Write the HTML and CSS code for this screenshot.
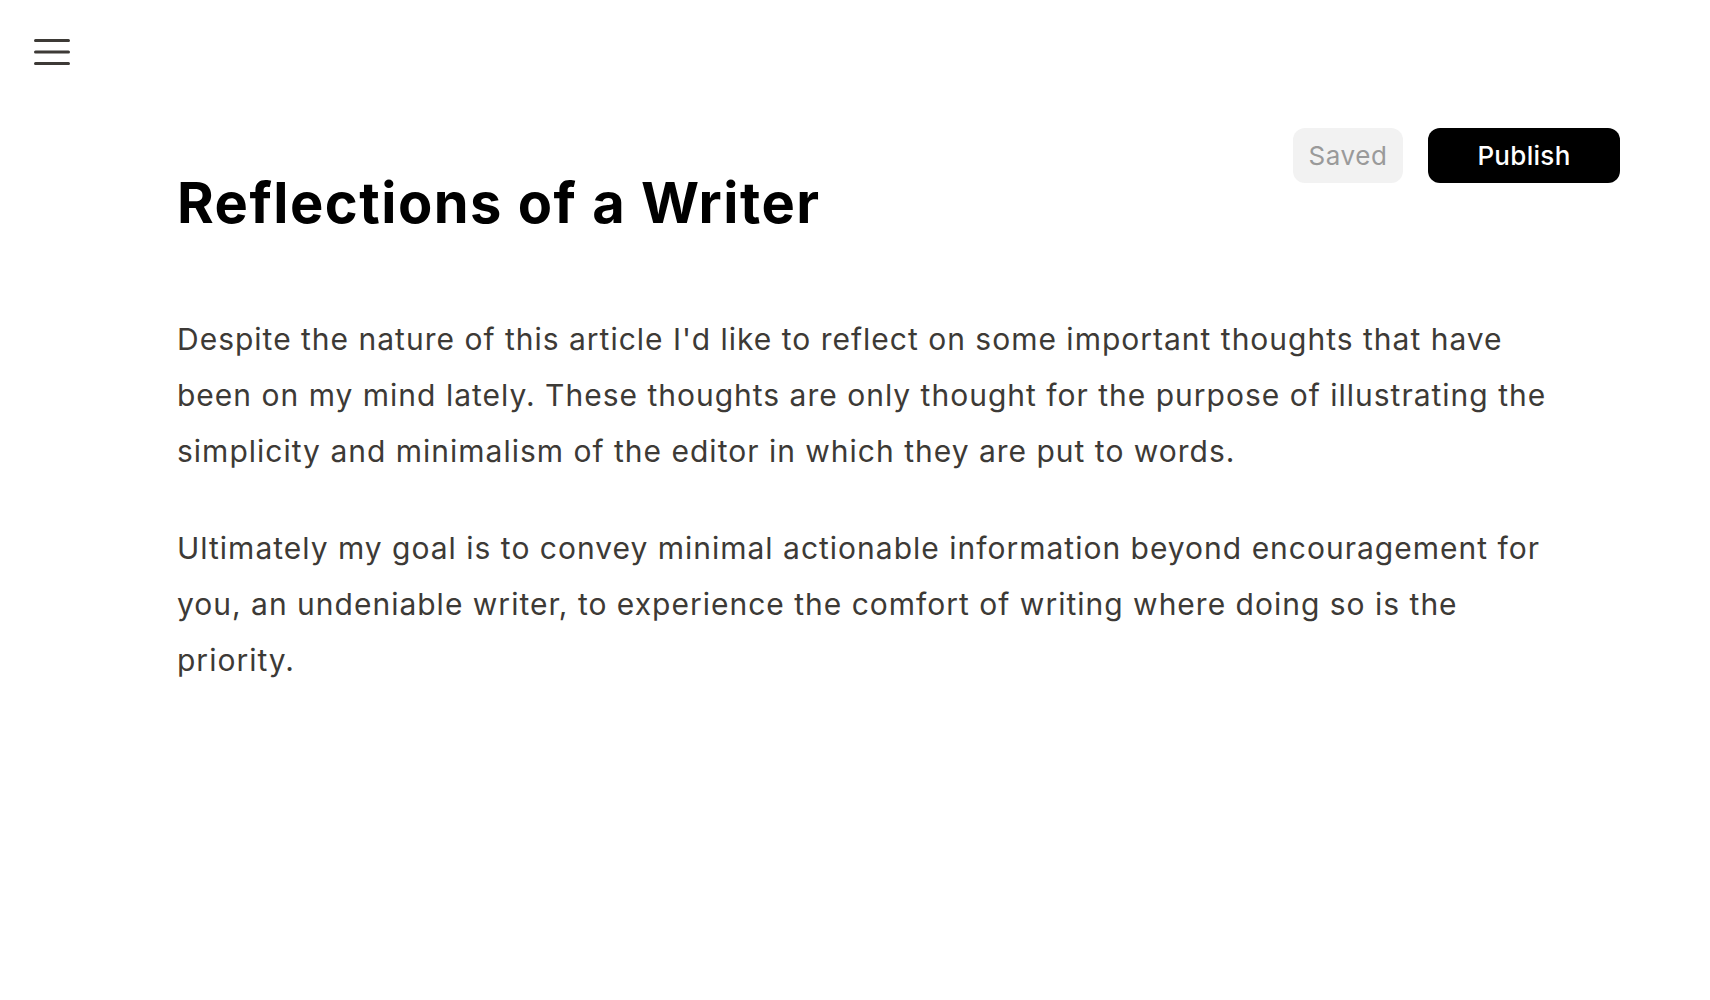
FILE: index.html
```html
<!DOCTYPE html>
<html lang="en">
<head>
    <meta charset="UTF-8">
    <meta name="viewport" content="width=device-width, initial-scale=1.0">
    <title>Reflections of a Writer</title>
    <link rel="stylesheet" href="styles.css">
</head>
<body>
    <header class="topbar">
        <button class="menu-btn" aria-label="Menu">
            <svg width="36" height="28" viewBox="0 0 36 28">
                <line x1="1.5" y1="2.5" x2="34.5" y2="2.5" />
                <line x1="1.5" y1="14" x2="34.5" y2="14" />
                <line x1="1.5" y1="25.5" x2="34.5" y2="25.5" />
            </svg>
        </button>
    </header>

    <main class="editor">
        <div class="actions">
            <span class="saved">Saved</span>
            <button class="publish">Publish</button>
        </div>

        <article class="doc">
            <h1>Reflections of a Writer</h1>
            <p>Despite the nature of this article I'd like to reflect on some important thoughts that have been on my mind lately. These thoughts are only thought for the purpose of illustrating the simplicity and minimalism of the editor in which they are put to words.</p>
            <p>Ultimately my goal is to convey minimal actionable information beyond encouragement for you, an undeniable writer, to experience the comfort of writing where doing so is the priority.</p>
        </article>
    </main>
</body>
</html>
```

FILE: styles.css
```css
* {
    margin: 0;
    padding: 0;
    box-sizing: border-box;
    font-family: 'Inter', 'Noto Sans', sans-serif;
}

body {
    min-height: 100vh;
    background: #fff;
    color: #3d3a36;
}

.topbar {
    display: flex;
    padding: 38px 34px 0;
}

.menu-btn {
    display: flex;
    background: none;
    border: none;
    cursor: pointer;
}

.menu-btn line {
    stroke: #3d3a36;
    stroke-width: 3;
    stroke-linecap: round;
}

.editor {
    position: relative;
    padding: 104px 90px 0 177px;
}

.actions {
    position: absolute;
    top: 62px;
    right: 90px;
    display: flex;
    gap: 25px;
}

.saved,
.publish {
    height: 55px;
    display: flex;
    align-items: center;
    justify-content: center;
    border-radius: 12px;
    font-size: 26px;
    letter-spacing: 0.6px;
}

.saved {
    width: 110px;
    background: #f2f2f2;
    color: #9a9a9a;
}

.publish {
    width: 192px;
    background: #000;
    color: #fff;
    border: none;
    font-weight: 500;
    letter-spacing: 0.3px;
    cursor: pointer;
}

.doc {
    max-width: 1380px;
}

.doc h1 {
    font-size: 56px;
    line-height: 1.2;
    font-weight: 700;
    color: #000;
    letter-spacing: 1.5px;
    margin-bottom: 74px;
}

.doc p {
    font-size: 30px;
    line-height: 56px;
    letter-spacing: 1px;
    margin-bottom: 41px;
}
```
